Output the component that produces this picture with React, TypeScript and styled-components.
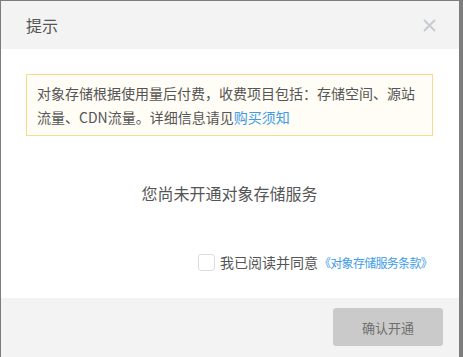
import React from "react";
import styled, { createGlobalStyle } from "styled-components";

const Global = createGlobalStyle`
  html, body { margin: 0; padding: 0; background: #7d7d7d; }
  body { font-family: "Noto Sans CJK SC", "Noto Sans", sans-serif; }
  * { box-sizing: border-box; }
`;

const Dialog = styled.div`
  margin: 1px 0 0 1px;
  width: 458px;
  height: 356px;
  background: #fff;
  display: flex;
  flex-direction: column;
`;

const Header = styled.div`
  height: 48px;
  background: #f3f3f3;
  display: flex;
  align-items: center;
  justify-content: space-between;
  padding: 0 22px 0 25px;
`;

const Title = styled.div`
  font-size: 16px;
  color: #555;
  line-height: 1;
`;

const Close = styled.button`
  width: 16px;
  height: 16px;
  padding: 0;
  border: none;
  background: none;
  display: flex;
  align-items: center;
  justify-content: center;
  cursor: pointer;
`;

const Body = styled.div`
  flex: 1;
  display: flex;
  flex-direction: column;
  padding: 25px 26px 0 25px;
`;

const Notice = styled.div`
  border: 1px solid #f6d98e;
  background: #fffdf6;
  padding: 6px 10px 6px 10px;
  font-size: 14px;
  line-height: 24px;
  color: #555;
`;

const Link = styled.a<{ $small?: boolean }>`
  color: #3d9be9;
  text-decoration: none;
  font-size: ${(p) => (p.$small ? "12px" : "inherit")};
  letter-spacing: ${(p) => (p.$small ? "-0.7px" : "normal")};
  margin-left: ${(p) => (p.$small ? "1px" : "0")};
`;

const Status = styled.div`
  margin-top: 47px;
  text-align: center;
  font-size: 16px;
  color: #555;
  line-height: 20px;
`;

const AgreeRow = styled.label`
  margin-top: 50px;
  display: flex;
  align-items: center;
  justify-content: flex-end;
  gap: 5px;
  font-size: 14px;
  color: #555;
  line-height: 18px;
  padding-right: 1px;
`;

const Box = styled.span`
  width: 17px;
  height: 17px;
  border: 1px solid #dcdcdc;
  border-radius: 3px;
  background: #fff;
`;

const Footer = styled.div`
  height: 59px;
  background: #f3f3f3;
  display: flex;
  align-items: center;
  justify-content: flex-end;
  padding: 0 16px 1px 0;
`;

const Button = styled.button`
  width: 110px;
  height: 38px;
  border: none;
  border-radius: 3px;
  background: #cacaca;
  color: #6f6f6f;
  font-family: inherit;
  font-size: 13px;
  cursor: not-allowed;
`;

export default function App() {
  return (
    <>
      <Global />
      <Dialog>
        <Header>
          <Title>提示</Title>
          <Close aria-label="关闭">
            <svg width="13" height="13" viewBox="0 0 13 13">
              <path d="M1 1L12 12M12 1L1 12" stroke="#c7cad0" strokeWidth="1.8" />
            </svg>
          </Close>
        </Header>
        <Body>
          <Notice>
            对象存储根据使用量后付费，收费项目包括：存储空间、源站流量、CDN流量。详细信息请见
            <Link href="#">购买须知</Link>
          </Notice>
          <Status>您尚未开通对象存储服务</Status>
          <AgreeRow>
            <Box />
            <span>
              我已阅读并同意<Link $small href="#">《对象存储服务条款》</Link>
            </span>
          </AgreeRow>
        </Body>
        <Footer>
          <Button disabled>确认开通</Button>
        </Footer>
      </Dialog>
    </>
  );
}
